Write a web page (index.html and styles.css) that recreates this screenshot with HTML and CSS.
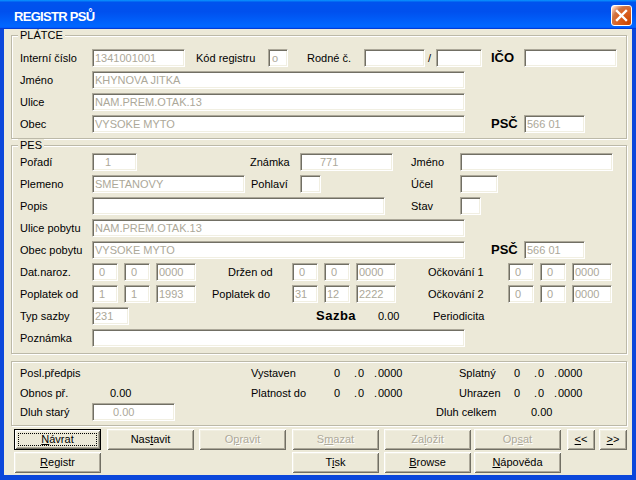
FILE: index.html
```
<!DOCTYPE html>
<html lang="cs">
<head>
<meta charset="utf-8">
<title>REGISTR PSŮ</title>
<link rel="stylesheet" href="styles.css">
</head>
<body>
<div class="window">
  <div class="titlebar">
    <span class="title">REGISTR PSŮ</span>
    <button class="close" aria-label="Zavřít">
      <svg width="19" height="19" viewBox="0 0 19 19"><path d="M5 5 L14 14 M14 5 L5 14" stroke="#fff" stroke-width="2.4" stroke-linecap="square" fill="none"/></svg>
    </button>
  </div>
  <div class="client">
    <fieldset class="group g-platce">
      <legend>PLÁTCE</legend>
      <div class="row">
        <span class="lbl lbl-main">Interní číslo</span>
        <span class="field w93">1341001001</span>
        <span class="lbl ml11 w72">Kód registru</span>
        <span class="field w20 ind3">o</span>
        <span class="lbl ml19 w57">Rodné č.</span>
        <span class="field w61"></span>
        <span class="lbl slash w11">/</span>
        <span class="field w46"></span>
        <span class="lbl lbl-b ml9 w33">IČO</span>
        <span class="field w93"></span>
      </div>
      <div class="row">
        <span class="lbl lbl-main">Jméno</span>
        <span class="field w373">KHYNOVA JITKA</span>
      </div>
      <div class="row">
        <span class="lbl lbl-main">Ulice</span>
        <span class="field w373">NAM.PREM.OTAK.13</span>
      </div>
      <div class="row">
        <span class="lbl lbl-main">Obec</span>
        <span class="field w373">VYSOKE MYTO</span>
        <span class="lbl lbl-b ml26 w33">PSČ</span>
        <span class="field w61">566 01</span>
      </div>
    </fieldset>

    <fieldset class="group g-pes">
      <legend>PES</legend>
      <div class="row">
        <span class="lbl lbl-main">Pořadí</span>
        <span class="field w45 ind12">1</span>
        <span class="lbl ml113 w50">Známka</span>
        <span class="field w93 ind19">771</span>
        <span class="lbl ml18 w49">Jméno</span>
        <span class="field w153"></span>
      </div>
      <div class="row">
        <span class="lbl lbl-main">Plemeno</span>
        <span class="field w153">SMETANOVY</span>
        <span class="lbl ml6 w49">Pohlaví</span>
        <span class="field w21"></span>
        <span class="lbl ml90 w49">Účel</span>
        <span class="field w38"></span>
      </div>
      <div class="row">
        <span class="lbl lbl-main">Popis</span>
        <span class="field w293"></span>
        <span class="lbl ml26 w49">Stav</span>
        <span class="field w21"></span>
      </div>
      <div class="row">
        <span class="lbl lbl-main">Ulice pobytu</span>
        <span class="field w373">NAM.PREM.OTAK.13</span>
      </div>
      <div class="row">
        <span class="lbl lbl-main">Obec pobytu</span>
        <span class="field w373">VYSOKE MYTO</span>
        <span class="lbl lbl-b ml26 w33">PSČ</span>
        <span class="field w61">566 01</span>
      </div>
      <div class="row">
        <span class="lbl lbl-main">Dat.naroz.</span>
        <span class="field w26 ind6">0</span>
        <span class="field w26 ml6 ind6">0</span>
        <span class="field w40 ml6">0000</span>
        <span class="lbl ml32 w64">Držen od</span>
        <span class="field w26 ind6">0</span>
        <span class="field w26 ml6 ind6">0</span>
        <span class="field w40 ml6">0000</span>
        <span class="lbl ml32 w80">Očkování 1</span>
        <span class="field w26 ind6">0</span>
        <span class="field w26 ml6 ind6">0</span>
        <span class="field w40 ml6">0000</span>
      </div>
      <div class="row">
        <span class="lbl lbl-main">Poplatek od</span>
        <span class="field w26 ind6">1</span>
        <span class="field w26 ml6 ind6">1</span>
        <span class="field w40 ml6">1993</span>
        <span class="lbl ml16 w80">Poplatek do</span>
        <span class="field w26">31</span>
        <span class="field w26 ml6">12</span>
        <span class="field w40 ml6">2222</span>
        <span class="lbl ml32 w80">Očkování 2</span>
        <span class="field w26 ind6">0</span>
        <span class="field w26 ml6 ind6">0</span>
        <span class="field w40 ml6">0000</span>
      </div>
      <div class="row">
        <span class="lbl lbl-main">Typ sazby</span>
        <span class="field w37">231</span>
        <span class="lbl sazba ml187 w62">Sazba</span>
        <span class="lbl w55">0.00</span>
        <span class="lbl">Periodicita</span>
      </div>
      <div class="row">
        <span class="lbl lbl-main">Poznámka</span>
        <span class="field w373"></span>
      </div>
    </fieldset>

    <div class="group summary">
      <div class="srow">
        <span class="lbl lbl-main">Posl.předpis</span>
        <span class="lbl ml159 w83">Vystaven</span>
        <span class="date"><span class="dn">0</span><span class="dd">.</span><span class="dm">0</span><span class="dd">.</span><span>0000</span></span>
        <span class="lbl w55">Splatný</span>
        <span class="date"><span class="dn">0</span><span class="dd">.</span><span class="dm">0</span><span class="dd">.</span><span>0000</span></span>
      </div>
      <div class="srow r2">
        <span class="lbl lbl-main">Obnos př.</span>
        <span class="lbl ml18 w141">0.00</span>
        <span class="lbl w83">Platnost do</span>
        <span class="date"><span class="dn">0</span><span class="dd">.</span><span class="dm">0</span><span class="dd">.</span><span>0000</span></span>
        <span class="lbl w55">Uhrazen</span>
        <span class="date"><span class="dn">0</span><span class="dd">.</span><span class="dm">0</span><span class="dd">.</span><span>0000</span></span>
      </div>
      <div class="srow r3">
        <span class="lbl lbl-main">Dluh starý</span>
        <span class="field w83 ind20">0.00</span>
        <span class="lbl ml261 w95">Dluh celkem</span>
        <span class="lbl">0.00</span>
      </div>
    </div>

    <div class="buttons">
      <button class="btn btn-default c1"><u>N</u>ávrat</button>
      <button class="btn c2">Nas<u>t</u>avit</button>
      <button class="btn c3" disabled>O<u>p</u>ravit</button>
      <button class="btn c4" disabled>S<u>m</u>azat</button>
      <button class="btn c5" disabled>Za<u>l</u>ožit</button>
      <button class="btn c6" disabled>Op<u>s</u>at</button>
      <button class="btn btn-nav c7"><u>&lt;</u>&lt;</button>
      <button class="btn btn-nav c8"><u>&gt;</u>&gt;</button>
      <button class="btn c1"><u>R</u>egistr</button>
      <button class="btn c4">T<u>i</u>sk</button>
      <button class="btn c5"><u>B</u>rowse</button>
      <button class="btn c6"><u>N</u>ápověda</button>
    </div>
  </div>
</div>
</body>
</html>
```
FILE: styles.css
```
* { box-sizing: border-box; }
html, body { margin: 0; padding: 0; background: #ffffff; }
body {
  font-family: "Liberation Sans", Arial, sans-serif;
  font-size: 11px;
  color: #000;
}
.window {
  width: 636px;
  height: 480px;
  background: #0b47db;
  display: flex;
  flex-direction: column;
  overflow: hidden;
}
.titlebar {
  height: 29px;
  flex: none;
  display: flex;
  align-items: flex-start;
  padding: 0 4px 0 14px;
  background: linear-gradient(180deg, #0997ff, #0053ee 8%, #0050ee 40%, #0066ff 88%, #0066ff 93%, #005bff 95%, #003dd7 96%, #003dd7);
}
.title {
  margin-top: 9px;
  color: #fff;
  font-weight: bold;
  font-size: 13px;
  line-height: 15px;
  letter-spacing: -0.7px;
}
.close {
  margin-left: auto;
  margin-top: 5px;
  width: 21px;
  height: 21px;
  padding: 0;
  border: 1px solid #fff;
  border-radius: 3px;
  background: radial-gradient(circle at 90% 90%, #cc4600 0%, #dc6527 55%, #cd7546 70%, #ffccb2 90%, #ffffff 100%);
  display: flex;
  align-items: center;
  justify-content: center;
}
.close svg { display: block; }
.client {
  flex: 1;
  margin: 0 4px 5px;
  background: #ece9d8;
  padding: 0 5px 0 7px;
  display: flex;
  flex-direction: column;
}
.group {
  margin: 0;
  border: 1px solid #bcb9a8;
  box-shadow: inset 1px 1px 0 #fff, 1px 1px 0 #fff;
  min-inline-size: 0;
}
.group legend {
  padding: 0 2px;
  margin-left: -2px;
  line-height: 13px;
  background: #ece9d8;
}
.g-platce { padding: 7px 8px 5px; }
.g-pes { padding: 1px 8px 6px; }
.summary { margin-top: 7px; padding: 2px 8px 4px; }

.row, .srow {
  display: flex;
  align-items: center;
  height: 18px;
}
.row + .row { margin-top: 4px; }
.srow.r2 { margin-top: 2px; }
.srow.r3 { margin-top: 1px; }

.lbl { flex: none; line-height: 18px; white-space: nowrap; }
.lbl-main { width: 72px; }
.lbl-b { font-weight: bold; font-size: 13px; }
.sazba { font-weight: bold; font-size: 13px; letter-spacing: 0.5px; }
.slash { padding-left: 3px; }

.field {
  display: block;
  flex: none;
  height: 18px;
  background: #fff;
  border: 1px solid;
  border-color: #aca899 #fff #fff #aca899;
  box-shadow: inset 1px 1px 0 #716f64, inset -1px -1px 0 #f1efe2;
  padding: 0 2px;
  line-height: 16px;
  color: #aca899;
  white-space: nowrap;
  overflow: hidden;
}
.ind3 { padding-left: 3px; }
.ind6 { padding-left: 6px; }
.ind12 { padding-left: 12px; }
.ind19 { padding-left: 19px; }
.ind20 { padding-left: 20px; }

.date { display: flex; width: 125px; flex: none; line-height: 18px; }
.dn { width: 20px; }
.dd { width: 4px; }
.dm { width: 16px; }

.w11 { width: 11px; } .w20 { width: 20px; } .w21 { width: 21px; }
.w26 { width: 26px; } .w33 { width: 33px; } .w37 { width: 37px; }
.w38 { width: 38px; } .w40 { width: 40px; } .w45 { width: 45px; }
.w46 { width: 46px; } .w49 { width: 49px; } .w50 { width: 50px; }
.w55 { width: 55px; } .w57 { width: 57px; } .w61 { width: 61px; }
.w62 { width: 62px; } .w64 { width: 64px; } .w72 { width: 72px; }
.w80 { width: 80px; } .w83 { width: 83px; } .w93 { width: 93px; }
.w95 { width: 95px; } .w141 { width: 141px; } .w153 { width: 153px; }
.w293 { width: 293px; } .w373 { width: 373px; }

.ml6 { margin-left: 6px; } .ml9 { margin-left: 9px; } .ml11 { margin-left: 11px; }
.ml16 { margin-left: 16px; } .ml18 { margin-left: 18px; } .ml19 { margin-left: 19px; }
.ml26 { margin-left: 26px; } .ml32 { margin-left: 32px; } .ml90 { margin-left: 90px; }
.ml113 { margin-left: 113px; } .ml159 { margin-left: 159px; } .ml187 { margin-left: 187px; }
.ml261 { margin-left: 261px; }

.buttons {
  margin-top: 3px;
  padding-left: 3px;
  display: grid;
  grid-template-columns: 93px 92px 93px 92px 90px 93px 32px 28px;
  grid-auto-rows: 21px;
  row-gap: 2px;
}
.c1 { grid-column: 1; } .c2 { grid-column: 2; } .c3 { grid-column: 3; }
.c4 { grid-column: 4; } .c5 { grid-column: 5; } .c6 { grid-column: 6; }
.c7 { grid-column: 7; } .c8 { grid-column: 8; }
.btn {
  position: relative;
  width: 87px;
  height: 21px;
  padding: 0;
  border: 0;
  background: #ece9d8;
  box-shadow: inset 1px 1px 0 #fff, inset -1px -1px 0 #716f64, inset 2px 2px 0 #f1efe2, inset -2px -2px 0 #aca899;
  font-family: inherit;
  font-size: 11px;
  color: #000;
  line-height: 19px;
  text-align: center;
}
.btn-nav { width: 28px; }
.btn-default { border: 1px solid #000; }
.btn-default::after {
  content: "";
  position: absolute;
  top: 3px; left: 3px; right: 3px; bottom: 3px;
  border: 1px dotted #000;
}
.btn:disabled { color: #aca899; text-shadow: 1px 1px 0 #fff; }
.btn u { text-decoration: underline; }
```
